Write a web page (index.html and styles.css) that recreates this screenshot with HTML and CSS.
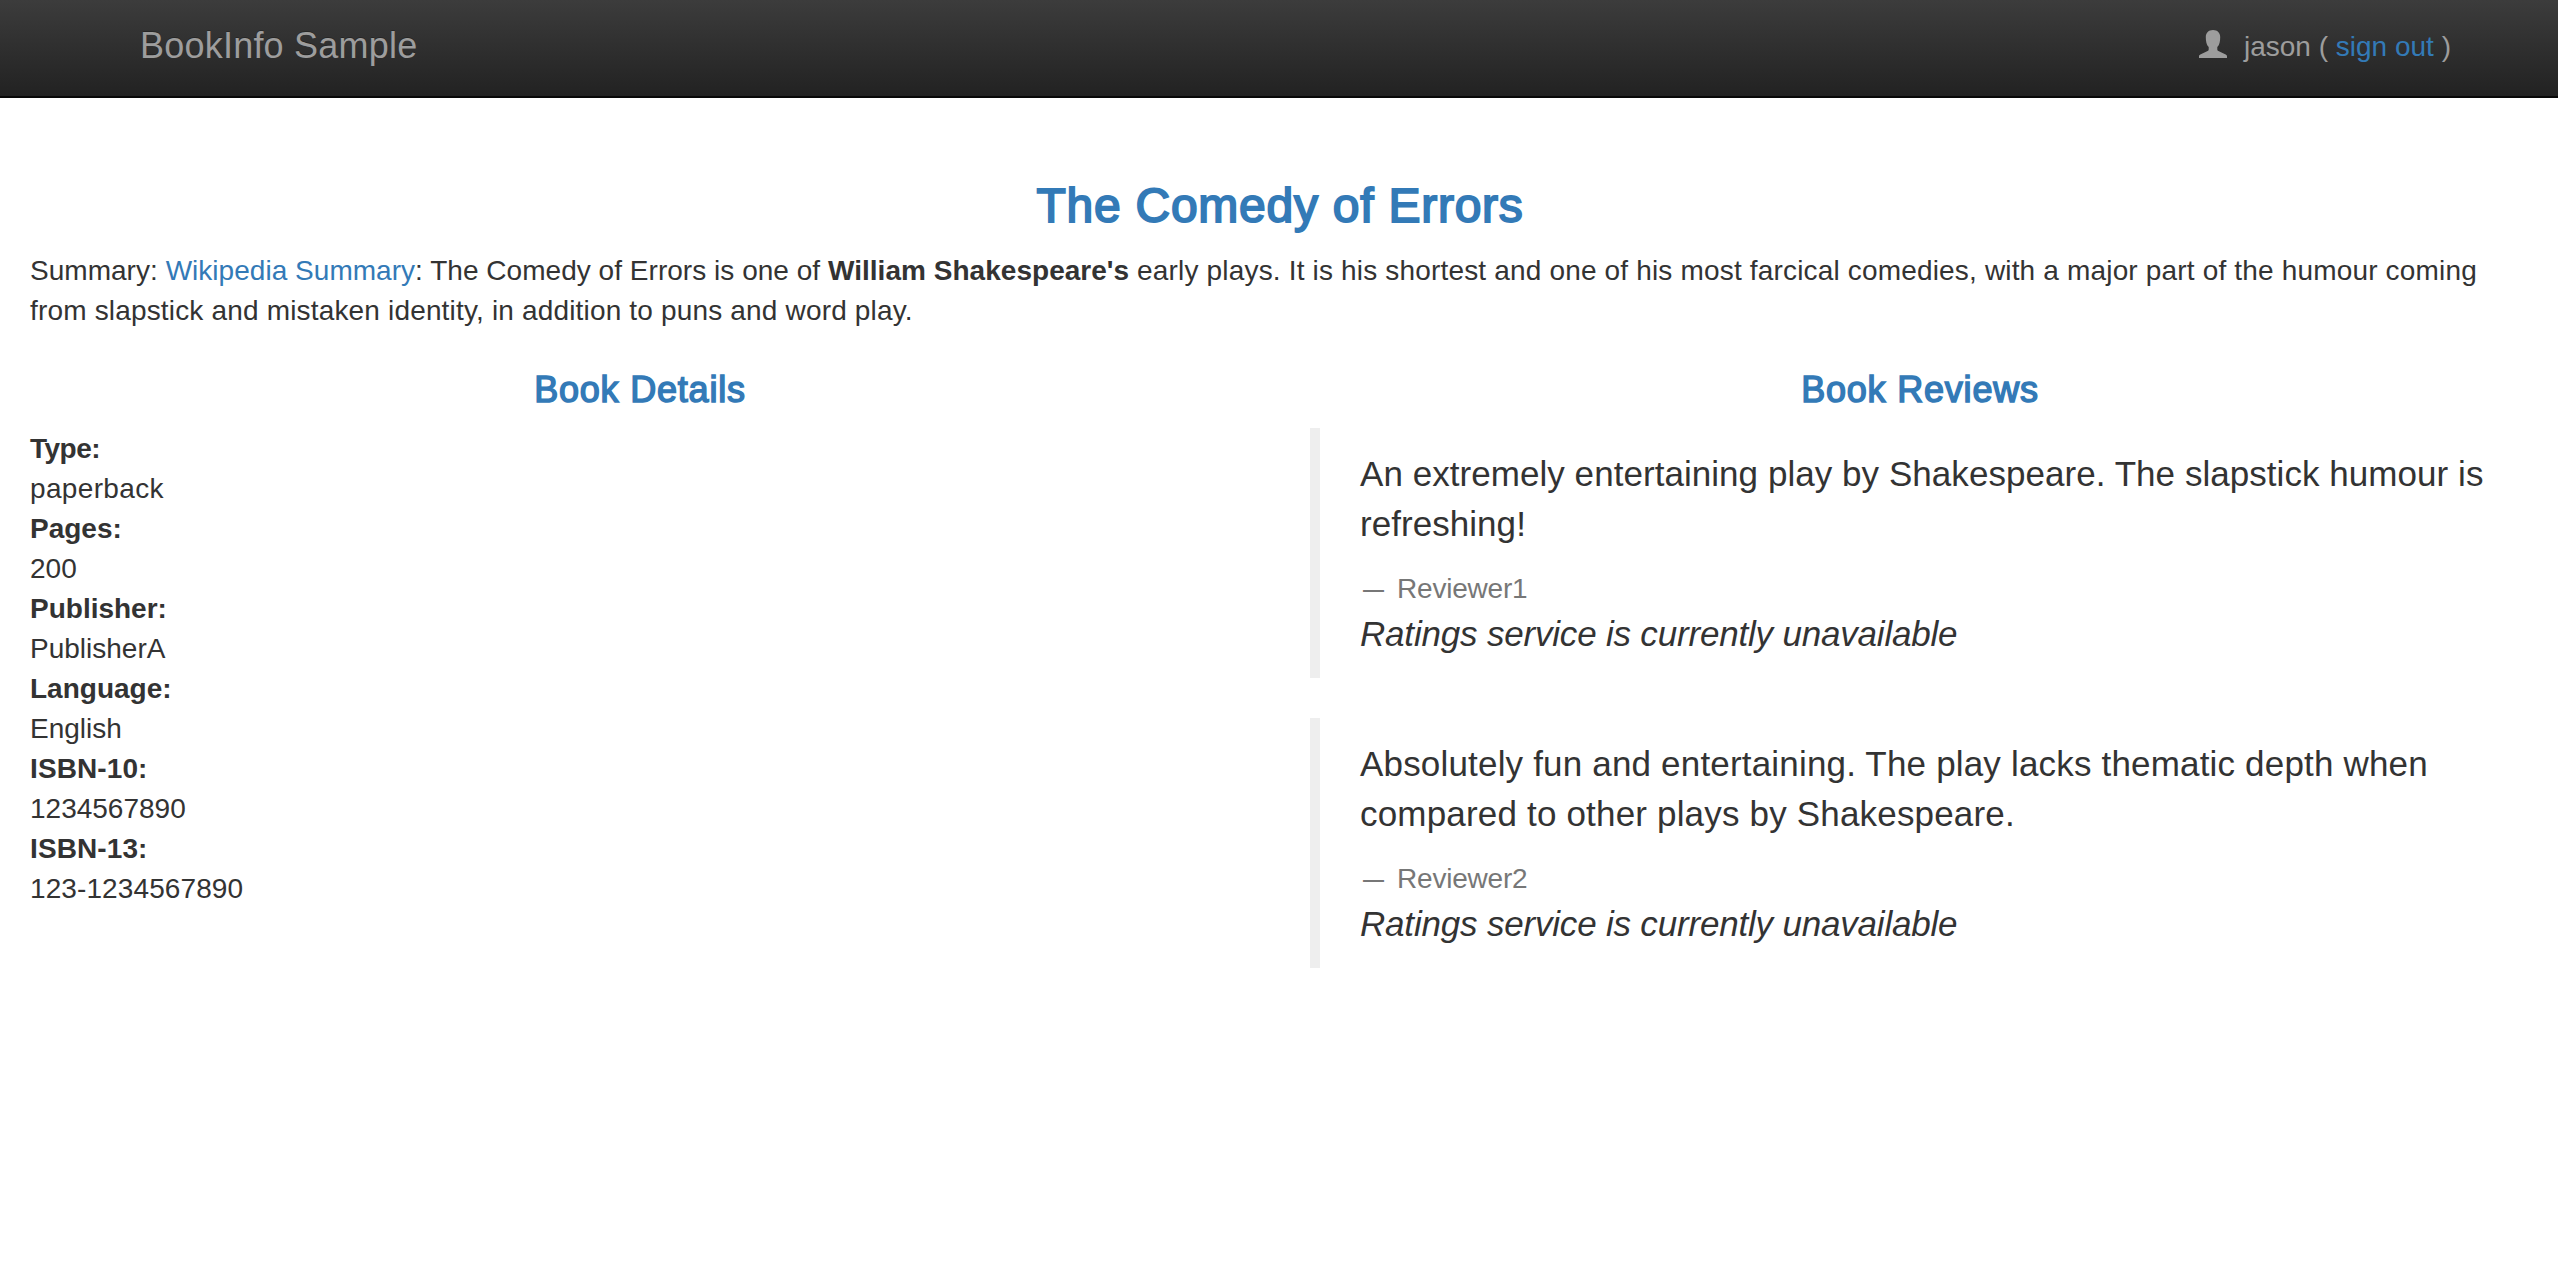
FILE: index.html
```
<!DOCTYPE html>
<html lang="en">
<head>
<meta charset="utf-8">
<title>Simple Bookstore App</title>
<link rel="stylesheet" href="styles.css">
</head>
<body>
<nav class="navbar">
  <a class="brand">BookInfo Sample</a>
  <div class="user">
    <svg class="user-icon" viewBox="0 0 28 28"><path d="M14 0C9.600 0 6.800 2.800 6.800 7c0 3.800.600 8 2.900 10v2.400c0 .7-.4 1.200-1.100 1.600L1.300 24.500C.4 25 0 25.500 0 26.400V28h28v-1.600c0-.9-.4-1.400-1.300-1.900L19.400 21c-.7-.4-1.100-.9-1.100-1.600V17c2.300-2 2.900-6.200 2.900-10C21.200 2.800 18.400 0 14 0z"/></svg>
    <span class="user-text">jason ( <a class="link">sign out</a> )</span>
  </div>
</nav>
<main class="page">
  <h3 class="title">The Comedy of Errors</h3>
  <p class="summary">Summary: <a class="link">Wikipedia Summary</a>: The Comedy of Errors is one of <b>William Shakespeare's</b><span class="summary-rest"> early plays. It is his shortest and one of his most farcical comedies, with a major part of the humour coming from slapstick and mistaken identity, in addition to puns and word play.</span></p>
  <div class="columns">
    <section>
      <h4 class="heading">Book Details</h4>
      <dl class="details">
        <dt class="type">Type:</dt><dd class="format">paperback</dd>
        <dt>Pages:</dt><dd>200</dd>
        <dt>Publisher:</dt><dd>PublisherA</dd>
        <dt>Language:</dt><dd>English</dd>
        <dt class="isbn">ISBN-10:</dt><dd>1234567890</dd>
        <dt class="isbn">ISBN-13:</dt><dd class="isbn">123-1234567890</dd>
      </dl>
    </section>
    <section>
      <h4 class="heading">Book Reviews</h4>
      <blockquote class="review">
        <p class="quote">An extremely entertaining play by Shakespeare. The slapstick humour is refreshing!</p>
        <small class="reviewer">Reviewer1</small>
        <i class="rating">Ratings service is currently unavailable</i>
      </blockquote>
      <blockquote class="review">
        <p class="quote quote-loose">Absolutely fun and entertaining. The play lacks thematic depth when compared to other plays by Shakespeare.</p>
        <small class="reviewer">Reviewer2</small>
        <i class="rating">Ratings service is currently unavailable</i>
      </blockquote>
    </section>
  </div>
</main>
</body>
</html>
```
FILE: styles.css
```
* { box-sizing: border-box; }
body { margin: 0; background: #fff; color: #333; font: 28px/40px "Liberation Sans", Arial, sans-serif; }
.link { color: #337ab7; }
.navbar { height: 98px; display: flex; justify-content: space-between; align-items: flex-start; padding: 0 107px 0 139px; background: linear-gradient(#3c3c3c, #222); border-bottom: 2px solid #080808; color: #9d9d9d; }
.brand { font-size: 36px; line-height: 40px; padding: 26px 0 0 1px; letter-spacing: .22px; text-shadow: 0 -1px 0 rgba(0,0,0,.25); }
.user { display: flex; padding-top: 26px; }
.user-icon { width: 28px; height: 28px; margin: 4px 17px 0 0; fill: #9d9d9d; }
.user-text { padding-top: 1px; }
.page { padding: 81px 28px 0 30px; }
.title { margin: 0 0 19px; font-size: 48px; line-height: 53px; letter-spacing: .75px; font-weight: 400; text-align: center; color: #337ab7; -webkit-text-stroke: 1.9px #337ab7; }
.summary { margin: 0 0 38px; padding-right: 30px; letter-spacing: .03px; }
.summary-rest { letter-spacing: .17px; }
.columns { display: grid; grid-template-columns: 1220px 1220px; gap: 60px; }
.heading { margin: 0 0 19px; padding-top: 1px; font-size: 36px; line-height: 39px; letter-spacing: .8px; font-weight: 400; text-align: center; color: #337ab7; -webkit-text-stroke: 1.5px #337ab7; }
.details { margin: 0; padding-top: 1px; }
.details dd { margin: 0; }
.details dt { font-weight: 700; }
.details .type { letter-spacing: -.5px; }
.details .format { letter-spacing: .35px; }
.details .isbn { letter-spacing: .1px; }
.review { height: 250px; margin: 0 0 40px; padding: 21px 40px 0; border-left: 10px solid #eee; font-size: 35px; line-height: 50px; }
.quote { margin: 0 0 20px; letter-spacing: .05px; }
.quote-loose { letter-spacing: .18px; }
.reviewer { display: block; font-size: 28px; line-height: 40px; letter-spacing: -.2px; color: #777; }
.reviewer::before { content: "—"; display: inline-block; width: 34px; padding-left: 3px; font-size: 21px; font-weight: 700; line-height: 20px; vertical-align: 2px; }
.rating { display: block; letter-spacing: -.19px; }
```
